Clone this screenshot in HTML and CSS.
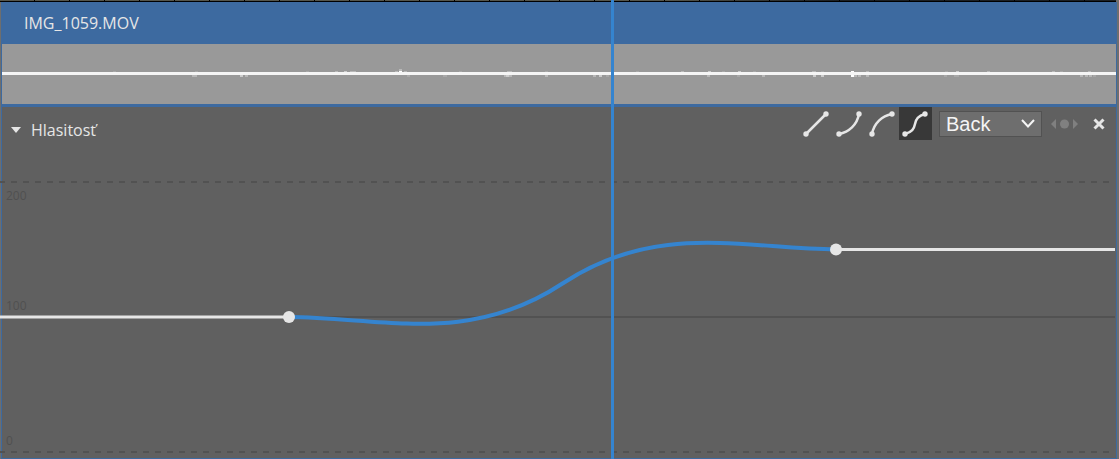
FILE: index.html
```html
<!DOCTYPE html>
<html lang="sk">

<head>
    <meta charset="UTF-8">
    <meta name="viewport" content="width=device-width, initial-scale=1.0">
    <title>IMG_1059.MOV</title>
    <link rel="stylesheet" href="styles.css">
</head>

<body>
    <main class="timeline">
        <div class="filmstrip"></div>

        <section class="clip">
            <header class="clip-title">IMG_1059.MOV</header>

            <svg class="waveform" viewBox="0 0 1114 60" preserveAspectRatio="none" aria-hidden="true">
                <rect y="28" width="1114" height="3" fill="#f5f5f5" />
                <!-- quiet peaks -->
                <path stroke="#a8a8a8" d="M111 27.5h3M193 27.5h3M304 27.5h3M457 27.5h3M543 27.5h3M634 27.5h3M720 27.5h3M751 27.5h3M819 27.5h3M943 27.5h3M1058 27.5h3" />
                <path stroke="#a8a8a8" stroke-width="2" d="M405 32h3M441 32h4M604 32h3M735 32h3M942 32h3M952 32h5M1091 32h3" />
                <!-- middle peaks -->
                <path stroke="#b8b8b8" d="M333 27.5h3M348 27.5h6M393 27.5h3M402 27.5h3M505 27.5h5M679 27.5h3M810 27.5h4M864 27.5h3M985 27.5h3M1050 27.5h3M1086 27.5h3" />
                <path stroke="#b8b8b8" stroke-width="2" d="M190 32h5M243 32h3M397 26h3M502 32h8M543 32h3M591 32h3M705 32h3M760 32h3M852 32h3M856 32h3M864 32h3M1078 32h3M1083 32h3M1087 32h3" />
                <!-- loud peaks -->
                <path stroke="#cccccc" d="M342 27.5h3M706 27.5h3M736 27.5h3M954 27.5h3" />
                <path stroke="#cccccc" stroke-width="2" d="M238 32h3M504 32h3M597 32h3M811 32h3M819 32h3" />
                <path stroke="#ffffff" d="M397 27.5h3M849 27.5h3" />
                <path stroke="#ffffff" stroke-width="2" d="M849 32h3" />
            </svg>

            <div class="effect">
                <svg class="graph" viewBox="0 0 1114 351" role="img" aria-label="Hlasitosť">
                    <g class="grid-lines">
                        <path class="dashed" d="M-3 75H1113M-3 345H1113" />
                        <path d="M-2 210H1113" />
                    </g>
                    <g class="grid-labels">
                        <text x="4" y="93">200</text>
                        <text x="4" y="203">100</text>
                        <text x="4" y="338">0</text>
                    </g>
                    <path class="level" d="M-2 210H287M834 142.5H1113" />
                    <path class="curve" d="M287 210C384 211 467 238 560.5 176.5C654 115 737 141 834 142.5" />
                    <circle class="keyframe" cx="287" cy="210" r="6" />
                    <circle class="keyframe" cx="834" cy="142.5" r="6" />
                </svg>

                <div class="effect-bar">
                    <button type="button" class="effect-name">
                        <svg width="10" height="6" viewBox="0 0 10 6" aria-hidden="true"><path d="M0 0h10L5 6z" fill="currentColor" /></svg>
                        Hlasitosť
                    </button>

                    <div class="tools">
                        <div class="easings">
                            <button type="button" class="easing" aria-label="Linear">
                                <svg viewBox="0 0 33 33"><path d="M6 27L26 7" /><circle cx="6" cy="27" r="2.7" /><circle cx="26" cy="7" r="2.7" /></svg>
                            </button>
                            <button type="button" class="easing" aria-label="Ease in">
                                <svg viewBox="0 0 33 33"><path d="M6 27C16 25 24 18 26 7" /><circle cx="6" cy="27" r="2.7" /><circle cx="26" cy="7" r="2.7" /></svg>
                            </button>
                            <button type="button" class="easing" aria-label="Ease out">
                                <svg viewBox="0 0 33 33"><path d="M6 27C8 16 16 9 26 7" /><circle cx="6" cy="27" r="2.7" /><circle cx="26" cy="7" r="2.7" /></svg>
                            </button>
                            <button type="button" class="easing active" aria-label="Ease in out" aria-pressed="true">
                                <svg viewBox="0 0 33 33"><path d="M6 27C13 25 15 22 16 17C17 12 19 9 26 7" /><circle cx="6" cy="27" r="2.7" /><circle cx="26" cy="7" r="2.7" /></svg>
                            </button>
                        </div>

                        <div class="preset">
                            <select aria-label="Preset">
                                <option>Back</option>
                            </select>
                            <svg width="14" height="9" viewBox="0 0 14 9" aria-hidden="true"><path d="M1 1L7 7.5L13 1" /></svg>
                        </div>

                        <div class="keyframe-nav">
                            <button type="button" aria-label="Previous keyframe" disabled>
                                <svg width="5" height="10" viewBox="0 0 5 10"><path d="M5 0v10L0 5z" /></svg>
                            </button>
                            <button type="button" aria-label="Add keyframe" disabled>
                                <svg width="9" height="10" viewBox="0 0 9 10"><circle cx="4.5" cy="5" r="4.5" /></svg>
                            </button>
                            <button type="button" aria-label="Next keyframe" disabled>
                                <svg width="5" height="10" viewBox="0 0 5 10"><path d="M0 0v10l5-5z" /></svg>
                            </button>
                        </div>

                        <button type="button" class="close" aria-label="Close">
                            <svg width="12" height="12" viewBox="0 0 12 12"><path d="M1.5 1.5l9 9M10.5 1.5l-9 9" /></svg>
                        </button>
                    </div>
                </div>
            </div>
        </section>

        <div class="playhead"></div>
    </main>
</body>

</html>
```
FILE: styles.css
```css
body {
    margin: 0;
    background-color: #6e6e6e;
    color: #e6e6e6;
    font-family: 'Segoe UI', 'Open Sans', 'Noto Sans', sans-serif;
    font-size: 16px;
}

button {
    padding: 0;
    border: none;
    background: none;
    color: inherit;
    font: inherit;
    cursor: pointer;
}

svg {
    display: block;
}

.timeline {
    position: relative;
    overflow: hidden;
}

.filmstrip {
    height: 1px;
    margin-right: 3px;
    border-bottom: 1px solid #000;
    background: repeating-linear-gradient(to right, transparent 0 34px, #000 34px 35px),
        linear-gradient(to right, #55554b 60%, #1c2024 75%);
}

.clip {
    margin: 0 2px 0 1px;
    border: 1px solid #3d6aa0;
    border-top: none;
}

.clip-title {
    padding: 0 22px;
    background-color: #3d6aa0;
    line-height: 42px;
}

.waveform {
    width: 100%;
    height: 60px;
    background-color: #999;
    border-bottom: 3px solid #3d6aa0;
}

/* graph and toolbar share one cell */
.effect {
    display: grid;
    background-color: #606060;
}

.graph,
.effect-bar {
    grid-area: 1 / 1;
}

.graph {
    width: 100%;
    height: auto;
    overflow: visible;
    fill: none;
}

.grid-lines {
    stroke: #525252;
    stroke-width: 2px;
}

.dashed {
    stroke-dasharray: 6 6;
}

.grid-labels {
    fill: #505050;
    font-size: 12px;
}

.level {
    stroke: #e6e6e6;
    stroke-width: 3px;
}

.curve {
    stroke: #3584cf;
    stroke-width: 4px;
}

.keyframe {
    fill: #e6e6e6;
}

.effect-bar {
    display: flex;
    justify-content: space-between;
    align-self: start;
    align-items: flex-start;
    padding: 0 11px 0 9px;
}

.effect-name {
    display: flex;
    align-items: center;
    gap: 10px;
    height: 46px;
}

.tools,
.easings,
.keyframe-nav {
    display: flex;
    align-items: center;
}

.easings {
    margin-right: 7px;
}

.easing {
    width: 33px;
    height: 33px;
}

.easing.active {
    background-color: #383838;
}

.easing path {
    fill: none;
    stroke: #e6e6e6;
    stroke-width: 2.5px;
}

.easing circle {
    fill: #e6e6e6;
}

.preset {
    display: grid;
    align-items: center;
}

.preset select {
    grid-area: 1 / 1;
    appearance: none;
    width: 103px;
    height: 26px;
    padding: 0 6px;
    border: 1px solid #525252;
    border-radius: 0;
    background-color: #6e6e6e;
    color: #f5f5f5;
    font-family: Arial, 'Liberation Sans', sans-serif;
    font-size: 20px;
    line-height: 24px;
}

.preset svg {
    grid-area: 1 / 1;
    justify-self: end;
    margin-right: 7px;
    fill: none;
    stroke: #f5f5f5;
    stroke-width: 2px;
    pointer-events: none;
}

.keyframe-nav {
    gap: 4px;
    margin: 0 15px 0 9px;
    fill: #808080;
}

.close path {
    stroke: #e6e6e6;
    stroke-width: 3px;
}

.playhead {
    position: absolute;
    top: 0;
    bottom: 0;
    left: 54.6%;
    width: 3px;
    background-color: #3584cf;
}
```
